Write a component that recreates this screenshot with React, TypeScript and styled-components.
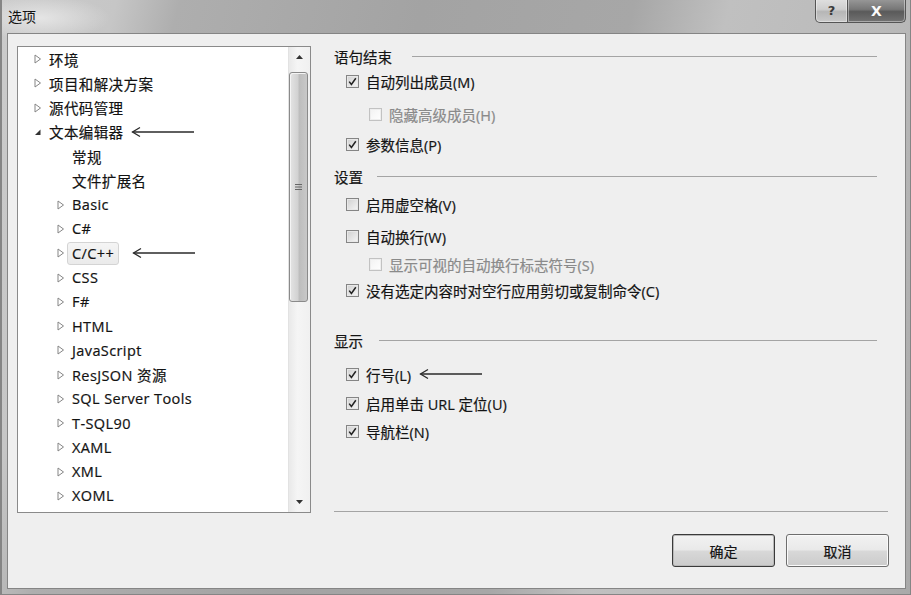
import React from "react";
import styled, { createGlobalStyle } from "styled-components";

const Global = createGlobalStyle`
  html, body { margin: 0; padding: 0; overflow: hidden; background: #b9b9b9; }
  #root { width: 911px; height: 595px; }
`;

const UIFONT = `"Open Sans", "Noto Sans CJK SC", sans-serif`;

const Window = styled.div`
  box-sizing: border-box;
  width: 911px;
  height: 595px;
  display: flex;
  flex-direction: column;
  padding: 0 5px 6px 7px;
  font-family: ${UIFONT};
  color: #121212;
  background:
    radial-gradient(ellipse 70px 22px at 40px 18px, rgba(232,232,232,0.9), rgba(232,232,232,0) 100%),
    linear-gradient(104deg, #cbcbcb 0%, #c6c6c6 11%, #aeaeae 17%, #a3a3a3 40%, #a7a7a7 60%, #c0c0c0 69%, #bababa 84%, #a9a9a9 100%);
  box-shadow: inset 2px 0 0 #858585, inset -1px 0 0 #858585, inset 0 -1px 0 #858585;
`;

const TitleBar = styled.div`
  height: 33px;
  display: flex;
  justify-content: space-between;
  align-items: flex-start;
  flex-shrink: 0;
`;

const Title = styled.div`
  margin-left: 1px;
  line-height: 33px;
  font-size: 14px;
  color: #141414;
`;

const CaptionButtons = styled.div`
  display: flex;
  margin-top: -1px;
`;

const CaptionButton = styled.div<{ $close?: boolean }>`
  box-sizing: border-box;
  height: 24px;
  width: ${(p) => (p.$close ? "58px" : "33px")};
  display: flex;
  align-items: center;
  justify-content: center;
  border: 1px solid #555;
  border-top: none;
  border-left: ${(p) => (p.$close ? "none" : "1px solid #555")};
  border-radius: ${(p) => (p.$close ? "0 0 5px 0" : "0 0 0 5px")};
  background: ${(p) =>
    p.$close
      ? "linear-gradient(#999 0%, #777 45%, #5a5a5a 55%, #737373 100%)"
      : "linear-gradient(#e0e0e0 0%, #cecece 45%, #b6b6b6 55%, #c9c9c9 100%)"};
  color: ${(p) => (p.$close ? "#fafafa" : "#3a3a3a")};
  font-family: "DejaVu Sans", sans-serif;
  font-weight: bold;
  font-size: ${(p) => (p.$close ? "14px" : "13px")};
  box-shadow: inset 0 0 0 1px rgba(255,255,255,0.4);
`;

const Client = styled.div`
  flex: 1;
  display: flex;
  flex-direction: column;
  border: 1px solid #858585;
  background: #efefef;
  padding: 12px 16px 21px 9px;
  min-height: 0;
`;

const Main = styled.div`
  display: flex;
  gap: 23px;
  height: 467px;
  flex-shrink: 0;
`;

const TreePanel = styled.div`
  box-sizing: border-box;
  width: 294px;
  height: 467px;
  border: 1px solid #8a8a8a;
  background: #ffffff;
  display: flex;
`;

const TreeList = styled.div`
  flex: 1;
  padding-top: 0;
  overflow: hidden;
`;

const TreeRow = styled.div<{ $level: number }>`
  height: 24.28px;
  display: flex;
  align-items: center;
  padding-left: ${(p) => 16 + p.$level * 23}px;
  font-size: 14.5px;
  letter-spacing: 0.4px;
  white-space: nowrap;
  -webkit-text-stroke: 0.2px #121212;
`;

const Expander = styled.span`
  width: 15px;
  height: 12px;
  flex-shrink: 0;
  display: flex;
  align-items: center;
`;

const TreeLabel = styled.span<{ $selected?: boolean }>`
  box-sizing: border-box;
  height: 23px;
  display: inline-flex;
  align-items: center;
  padding: 0 4px;
  margin-left: -5px;
  border: 1px solid ${(p) => (p.$selected ? "#d4d4d4" : "transparent")};
  border-radius: 3px;
  background: ${(p) => (p.$selected ? "linear-gradient(#f5f5f5, #eaeaea)" : "transparent")};
`;

const Pointer = styled.svg<{ $gap: number }>`
  margin-left: ${(p) => p.$gap}px;
  flex-shrink: 0;
`;

const ScrollBar = styled.div`
  width: 21px;
  display: flex;
  flex-direction: column;
  background: linear-gradient(90deg, #e9e9e9, #f5f5f5 40%, #f0f0f0);
  border-left: 1px solid #e2e2e2;
`;

const ScrollButton = styled.div`
  height: 20px;
  display: flex;
  align-items: center;
  justify-content: center;
  flex-shrink: 0;
`;

const ScrollTrack = styled.div`
  flex: 1;
  padding: 5px 2px 0 0;
`;

const Thumb = styled.div`
  box-sizing: border-box;
  height: 230px;
  border: 1px solid #8a8a8a;
  border-radius: 3px;
  background: linear-gradient(90deg, #e4e4e4 0%, #d2d2d2 45%, #bdbdbd 55%, #c8c8c8 100%);
  display: flex;
  align-items: center;
  justify-content: center;
  box-shadow: inset 1px 1px 0 #f4f4f4;
`;

const Options = styled.div`
  flex: 1;
  display: flex;
  flex-direction: column;
  padding-right: 1px;
  font-size: 14.5px;
  -webkit-text-stroke: 0.2px currentColor;
`;

const GroupHeading = styled.div<{ $mt: number; $gap: number }>`
  height: 24px;
  margin-top: ${(p) => p.$mt}px;
  display: flex;
  align-items: center;
  gap: ${(p) => p.$gap}px;
  padding-right: 11px;
  color: #141414;
`;

const Rule = styled.div`
  flex: 1;
  height: 1px;
  background: #a4a4a4;
`;

const OptionRow = styled.div<{ $mt: number; $indent: number; $disabled?: boolean }>`
  height: 24px;
  margin-top: ${(p) => p.$mt}px;
  padding-left: ${(p) => p.$indent}px;
  display: flex;
  align-items: center;
  gap: 7px;
  color: ${(p) => (p.$disabled ? "#8a8a8a" : "#141414")};
  white-space: nowrap;
`;

const Box = styled.span<{ $disabled?: boolean }>`
  box-sizing: border-box;
  width: 13px;
  height: 13px;
  flex-shrink: 0;
  border: 1px solid ${(p) => (p.$disabled ? "#c2c2c2" : "#858585")};
  background: ${(p) =>
    p.$disabled ? "linear-gradient(135deg, #f2f2f2, #ffffff)" : "linear-gradient(135deg, #d0d0d0, #f6f6f6)"};
  box-shadow: inset 0 0 0 1px ${(p) => (p.$disabled ? "#eeeeee" : "#e8e8e8")};
  display: flex;
  align-items: center;
  justify-content: center;
`;

const Separator = styled.div`
  margin-top: auto;
  height: 1px;
  background: #a4a4a4;
  margin-bottom: 1px;
`;

const Footer = styled.div`
  margin-top: auto;
  display: flex;
  justify-content: flex-end;
  gap: 11px;
`;

const DialogButton = styled.button<{ $default?: boolean }>`
  box-sizing: border-box;
  width: 103px;
  height: 33px;
  border: 1px solid ${(p) => (p.$default ? "#3a3a3a" : "#6e6e6e")};
  border-radius: 3px;
  background: linear-gradient(#f2f2f2 0%, #e9e9e9 48%, #d8d8d8 52%, #cbcbcb 100%);
  box-shadow: inset 0 0 0 1px ${(p) => (p.$default ? "#b8b8b8" : "#fafafa")};
  font-family: ${UIFONT};
  font-size: 14px;
  color: #141414;
  -webkit-text-stroke: 0.2px #141414;
  padding: 0;
`;

const Arrow = ({ gap, width = 64 }: { gap: number; width?: number }) => (
  <Pointer $gap={gap} width={width} height={12} viewBox={`0 0 ${width} 12`}>
    <path d={`M1.5 6 H${width - 1}`} stroke="#2a2a2a" strokeWidth="1.3" fill="none" />
    <path d="M9 1.5 L1.5 6 L9 10.5" stroke="#2a2a2a" strokeWidth="1.3" fill="none" />
  </Pointer>
);

const Collapsed = () => (
  <svg width="8" height="10" viewBox="0 0 8 10">
    <path d="M1 1 L6.5 5 L1 9 Z" fill="#fff" stroke="#858585" strokeWidth="1" />
  </svg>
);

const Expanded = () => (
  <svg width="8" height="10" viewBox="0 0 8 10">
    <path d="M6.5 2.5 L6.5 8 L1 8 Z" fill="#333" />
  </svg>
);

const Check = () => (
  <svg width="11" height="11" viewBox="0 0 11 11">
    <path d="M2.2 5.6 L4.4 8.4 L8.8 2.2" stroke="#222" strokeWidth="1.5" fill="none" />
  </svg>
);

type TreeItem = {
  label: string;
  level: number;
  state: "none" | "collapsed" | "expanded";
  selected?: boolean;
  pointer?: number;
};

const treeItems: TreeItem[] = [
  { label: "环境", level: 0, state: "collapsed" },
  { label: "项目和解决方案", level: 0, state: "collapsed" },
  { label: "源代码管理", level: 0, state: "collapsed" },
  { label: "文本编辑器", level: 0, state: "expanded", pointer: 2 },
  { label: "常规", level: 1, state: "none" },
  { label: "文件扩展名", level: 1, state: "none" },
  { label: "Basic", level: 1, state: "collapsed" },
  { label: "C#", level: 1, state: "collapsed" },
  { label: "C/C++", level: 1, state: "collapsed", selected: true, pointer: 13 },
  { label: "CSS", level: 1, state: "collapsed" },
  { label: "F#", level: 1, state: "collapsed" },
  { label: "HTML", level: 1, state: "collapsed" },
  { label: "JavaScript", level: 1, state: "collapsed" },
  { label: "ResJSON 资源", level: 1, state: "collapsed" },
  { label: "SQL Server Tools", level: 1, state: "collapsed" },
  { label: "T-SQL90", level: 1, state: "collapsed" },
  { label: "XAML", level: 1, state: "collapsed" },
  { label: "XML", level: 1, state: "collapsed" },
  { label: "XOML", level: 1, state: "collapsed" },
];

type Opt =
  | { kind: "heading"; text: string; mt: number; gap: number }
  | { kind: "check"; text: string; mt: number; indent: number; checked: boolean; disabled?: boolean; pointer?: boolean };

const options: Opt[] = [
  { kind: "heading", text: "语句结束", mt: -2, gap: 20 },
  { kind: "check", text: "自动列出成员(M)", mt: 1, indent: 12, checked: true },
  { kind: "check", text: "隐藏高级成员(H)", mt: 9, indent: 35, checked: false, disabled: true },
  { kind: "check", text: "参数信息(P)", mt: 6, indent: 12, checked: true },
  { kind: "heading", text: "设置", mt: 8, gap: 14 },
  { kind: "check", text: "启用虚空格(V)", mt: 4, indent: 12, checked: false },
  { kind: "check", text: "自动换行(W)", mt: 8, indent: 12, checked: false },
  { kind: "check", text: "显示可视的自动换行标志符号(S)", mt: 4, indent: 35, checked: false, disabled: true },
  { kind: "check", text: "没有选定内容时对空行应用剪切或复制命令(C)", mt: 2, indent: 12, checked: true },
  { kind: "heading", text: "显示", mt: 26, gap: 16 },
  { kind: "check", text: "行号(L)", mt: 10, indent: 12, checked: true, pointer: true },
  { kind: "check", text: "启用单击 URL 定位(U)", mt: 5, indent: 12, checked: true },
  { kind: "check", text: "导航栏(N)", mt: 4, indent: 12, checked: true },
];

export default function App() {
  return (
    <>
      <Global />
      <Window>
        <TitleBar>
          <Title>选项</Title>
          <CaptionButtons>
            <CaptionButton>?</CaptionButton>
            <CaptionButton $close>X</CaptionButton>
          </CaptionButtons>
        </TitleBar>
        <Client>
          <Main>
            <TreePanel>
              <TreeList>
                {treeItems.map((it) => (
                  <TreeRow key={it.label} $level={it.level}>
                    <Expander>
                      {it.state === "collapsed" && <Collapsed />}
                      {it.state === "expanded" && <Expanded />}
                    </Expander>
                    <TreeLabel $selected={it.selected}>{it.label}</TreeLabel>
                    {it.pointer !== undefined && <Arrow gap={it.pointer} />}
                  </TreeRow>
                ))}
              </TreeList>
              <ScrollBar>
                <ScrollButton>
                  <svg width="7" height="4" viewBox="0 0 7 4">
                    <path d="M0 4 L3.5 0 L7 4 Z" fill="#333" />
                  </svg>
                </ScrollButton>
                <ScrollTrack>
                  <Thumb>
                    <svg width="7" height="8" viewBox="0 0 7 8">
                      <path d="M0 1.5 H7 M0 4 H7 M0 6.5 H7" stroke="#666" strokeWidth="1" />
                    </svg>
                  </Thumb>
                </ScrollTrack>
                <ScrollButton>
                  <svg width="7" height="4" viewBox="0 0 7 4">
                    <path d="M0 0 L3.5 4 L7 0 Z" fill="#333" />
                  </svg>
                </ScrollButton>
              </ScrollBar>
            </TreePanel>
            <Options>
              {options.map((o) =>
                o.kind === "heading" ? (
                  <GroupHeading key={o.text} $mt={o.mt} $gap={o.gap}>
                    <span>{o.text}</span>
                    <Rule />
                  </GroupHeading>
                ) : (
                  <OptionRow key={o.text} $mt={o.mt} $indent={o.indent} $disabled={o.disabled}>
                    <Box $disabled={o.disabled}>{o.checked && <Check />}</Box>
                    <span>{o.text}</span>
                    {o.pointer && <Arrow gap={1} />}
                  </OptionRow>
                )
              )}
              <Separator />
            </Options>
          </Main>
          <Footer>
            <DialogButton $default>确定</DialogButton>
            <DialogButton>取消</DialogButton>
          </Footer>
        </Client>
      </Window>
    </>
  );
}
